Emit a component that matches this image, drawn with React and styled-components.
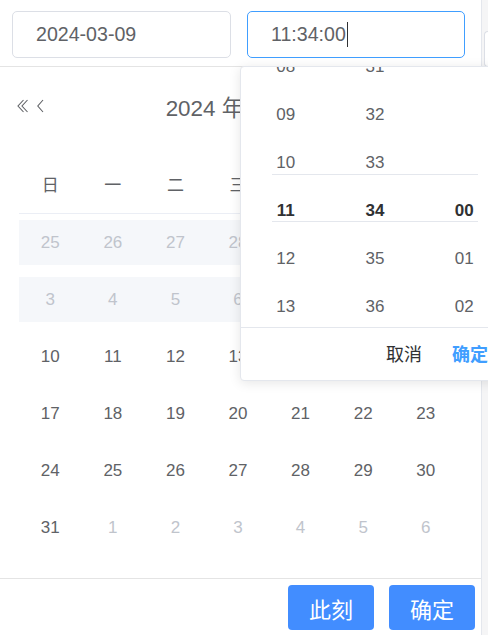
import React from 'react';
import styled, { createGlobalStyle } from 'styled-components';

const Global = createGlobalStyle`
  html, body { margin: 0; padding: 0; background: #fff; overflow: hidden; }
  body { font-family: "Liberation Sans", Arial, "Noto Sans CJK SC", sans-serif; }
  * { box-sizing: border-box; }
`;

const Page = styled.div`
  position: relative;
  width: 488px;
  height: 635px;
  display: flex;
  overflow: hidden;
`;

const Panel = styled.div`
  width: 482px;
  height: 635px;
  border-right: 1px solid #e4e7ed;
  display: flex;
  flex-direction: column;
  background: #fff;
`;

const Gutter = styled.div`
  flex: 1;
  background: #f5f5f6;
  padding-top: 31px;
`;

const GutterBox = styled.div`
  height: 36px;
  margin-left: 2px;
  border: 1px solid #dcdfe6;
  border-right: none;
  border-radius: 4px 0 0 4px;
  background: #fff;
`;

const TimeHeader = styled.div`
  height: 67px;
  border-bottom: 1px solid #e4e4e4;
  display: flex;
  align-items: flex-start;
  padding: 11px 0 0 12px;
  gap: 16px;
`;

const Input = styled.div`
  width: ${p => p.$w}px;
  height: 47px;
  border: 1px solid ${p => (p.$focus ? '#409eff' : '#dcdfe6')};
  border-radius: 5px;
  padding-left: 23px;
  display: flex;
  align-items: center;
  font-size: 19.6px;
  color: #606266;
`;

const Caret = styled.span`
  display: inline-block;
  width: 0;
  height: 25px;
  border-left: 1.5px solid #303133;
  margin-left: 1px;
`;

const CalHeader = styled.div`
  height: 78px;
  display: flex;
  align-items: center;
  padding: 0 16px 0 17px;
`;

const IconBtn = styled.span`
  display: inline-flex;
  align-items: center;
  color: #606266;
  margin-right: ${p => p.$mr || 0}px;
`;

const Title = styled.div`
  flex: 1;
  text-align: center;
  font-size: 22.4px;
  color: #606266;
  padding-right: 52px;
`;

const Grid = styled.div`
  margin-left: 19px;
  width: 438px;
  display: grid;
  grid-template-columns: repeat(7, 1fr);
`;

const WeekHead = styled.div`
  height: 61px;
  margin-top: 8px;
  border-bottom: 1px solid #ebeef5;
  display: flex;
  align-items: center;
  justify-content: center;
  font-size: 17px;
  color: #606266;
`;

const DayCell = styled.div`
  height: 57px;
  padding: 6px 0;
`;

const DayInner = styled.div`
  height: 45px;
  display: flex;
  align-items: center;
  justify-content: center;
  font-size: 17px;
  background: ${p => (p.$disabled ? '#f5f7fa' : 'transparent')};
  color: ${p => (p.$muted || p.$disabled ? '#c0c4cc' : '#606266')};
`;

const Footer = styled.div`
  margin-top: auto;
  height: 57px;
  border-top: 1px solid #e4e4e4;
  display: flex;
  justify-content: flex-end;
  align-items: flex-start;
  padding: 6px 6px 0 0;
  gap: 15px;
`;

const PrimaryBtn = styled.button`
  width: 86px;
  height: 45px;
  border: none;
  border-radius: 4px;
  background: #428dff;
  color: #fff;
  font-family: "Liberation Sans", Arial, "Noto Sans CJK SC", sans-serif;
  font-size: 22px;
  padding: 0;
`;

/* time spinner overlay */
const TimePanel = styled.div`
  position: absolute;
  left: 240px;
  top: 66px;
  width: 270px;
  height: 315px;
  background: #fff;
  border: 1px solid #e4e7ed;
  border-radius: 4px;
  box-shadow: 0 2px 12px 0 rgba(0, 0, 0, 0.1);
  display: flex;
  flex-direction: column;
  z-index: 2;
`;

const Spinner = styled.div`
  position: relative;
  height: 260px;
  overflow: hidden;
  display: flex;
  align-items: flex-start;
`;

const Column = styled.div`
  width: 90px;
  display: flex;
  flex-direction: column;
  margin-top: ${p => p.$offset}px;
`;

const Item = styled.div`
  height: 48px;
  flex: none;
  display: flex;
  align-items: center;
  justify-content: center;
  font-size: 17px;
  color: ${p => (p.$active ? '#303133' : '#606266')};
  font-weight: ${p => (p.$active ? 700 : 400)};
`;

const SelLine = styled.div`
  position: absolute;
  left: 31px;
  width: 206px;
  top: ${p => p.$top}px;
  border-top: 1px solid #e4e7ed;
`;

const TimeFooter = styled.div`
  flex: 1;
  border-top: 1px solid #e4e7ed;
  display: flex;
  align-items: center;
  justify-content: flex-end;
  padding: 0 21px 2px 0;
  gap: 30px;
  font-size: 18px;
`;

const TextBtn = styled.span`
  color: ${p => (p.$primary ? '#409eff' : '#303133')};
  font-weight: ${p => (p.$primary ? 700 : 400)};
`;

const DoubleLeft = () => (
  <svg width="12" height="14" viewBox="0 0 12 14" fill="none" stroke="#606266" strokeWidth="1.1">
    <path d="M6.5 1 L1 7 L6.5 13" />
    <path d="M10.5 1 L5 7 L10.5 13" />
  </svg>
);

const Left = () => (
  <svg width="7" height="14" viewBox="0 0 7 14" fill="none" stroke="#606266" strokeWidth="1.1">
    <path d="M6 1 L0.8 7 L6 13" />
  </svg>
);

const pad = n => String(n).padStart(2, '0');
const ITEM = 48;
const BASE = 120;

const weeks = ['日', '一', '二', '三', '四', '五', '六'];

const buildDays = () => {
  const days = [];
  [25, 26, 27, 28, 29, 1, 2].forEach(d => days.push({ d, disabled: true }));
  [3, 4, 5, 6, 7, 8, 9].forEach(d => days.push({ d, disabled: true }));
  for (let d = 10; d <= 31; d++) days.push({ d });
  [1, 2, 3, 4, 5, 6].forEach(d => days.push({ d, muted: true }));
  return days;
};

/* only the items inside the visible window of the scrolled list are drawn */
const SpinColumn = ({ count, selected }) => {
  const first = Math.max(0, selected - 3);
  const last = Math.min(count - 1, selected + 2);
  const items = [];
  for (let i = first; i <= last; i++) items.push(i);
  return (
    <Column $offset={BASE - (selected - first) * ITEM}>
      {items.map(i => (
        <Item key={i} $active={i === selected}>{pad(i)}</Item>
      ))}
    </Column>
  );
};

export default function App() {
  const days = buildDays();
  return (
    <Page>
      <Global />
      <Panel>
        <TimeHeader>
          <Input $w={219}>2024-03-09</Input>
          <Input $w={218} $focus>11:34:00<Caret /></Input>
        </TimeHeader>
        <CalHeader>
          <IconBtn $mr={8}><DoubleLeft /></IconBtn>
          <IconBtn><Left /></IconBtn>
          <Title>2024 年 3 月</Title>
        </CalHeader>
        <Grid>
          {weeks.map(w => <WeekHead key={w}>{w}</WeekHead>)}
          {days.map((x, i) => (
            <DayCell key={i}>
              <DayInner $disabled={x.disabled} $muted={x.muted}>{x.d}</DayInner>
            </DayCell>
          ))}
        </Grid>
        <Footer>
          <PrimaryBtn>此刻</PrimaryBtn>
          <PrimaryBtn>确定</PrimaryBtn>
        </Footer>
      </Panel>
      <Gutter><GutterBox /></Gutter>
      <TimePanel>
        <Spinner>
          <SpinColumn count={24} selected={11} />
          <SpinColumn count={60} selected={34} />
          <SpinColumn count={60} selected={0} />
          <SelLine $top={107} />
          <SelLine $top={154} />
        </Spinner>
        <TimeFooter>
          <TextBtn>取消</TextBtn>
          <TextBtn $primary>确定</TextBtn>
        </TimeFooter>
      </TimePanel>
    </Page>
  );
}
